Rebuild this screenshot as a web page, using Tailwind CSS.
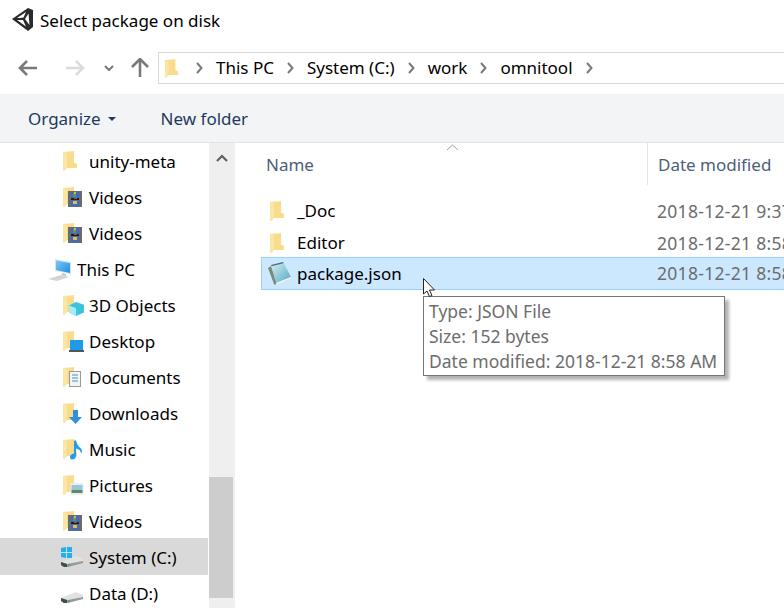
<!DOCTYPE html>
<html lang="en">
<head>
    <meta charset="UTF-8">
    <title>Select package on disk</title>
    <script src="https://cdn.jsdelivr.net/npm/@tailwindcss/browser@4"></script>
</head>
<body class="bg-white">
    <svg width="0" height="0" class="absolute">
        <defs>
            <linearGradient id="fold" x1="0" y1="0" x2="1" y2="0">
                <stop offset="0" stop-color="#f6d987"/>
                <stop offset="1" stop-color="#fdecaf"/>
            </linearGradient>
            <linearGradient id="page" x1="0" y1="0" x2="1" y2="1">
                <stop offset="0" stop-color="#d8f0f4"/>
                <stop offset="1" stop-color="#4fa9c4"/>
            </linearGradient>
            <linearGradient id="screen" x1="0" y1="0" x2="1" y2="1">
                <stop offset="0" stop-color="#7cc8f6"/>
                <stop offset="1" stop-color="#1e8fe0"/>
            </linearGradient>
            <symbol id="folder" viewBox="0 0 15 20">
                <path d="M0 1 L11 0 V12 L14 13 V17 H4 L1 20 H0 Z" fill="url(#fold)"/>
                <path d="M0 1 L4 2 V17 L1 20 H0 Z" fill="#fbe7a5"/>
                <path d="M4 2 L11 0 V12 L14 13 V17 H4 Z" fill="#f8dc8c"/>
            </symbol>
            <symbol id="film" viewBox="0 0 14 16">
                <rect width="14" height="16" fill="#6b6b6b"/>
                <rect x="3" y="1" width="8" height="6" fill="#3a6cc4"/>
                <rect x="3" y="9" width="8" height="6" fill="#3a6cc4"/>
                <rect x="5" y="2" width="3" height="4" fill="#5a9a50"/>
                <rect x="6" y="1" width="2" height="2" fill="#e0b040"/>
                <rect x="5" y="10" width="4" height="3" fill="#e0c040"/>
                <rect x="3" y="7" width="8" height="2" fill="#2a1a1a"/>
                <rect x="6" y="7" width="3" height="1" fill="#c04040"/>
            </symbol>
            <symbol id="drive" viewBox="0 0 22 11">
                <path d="M0 6 L15 0 L22 3 V5 L6 8 Z" fill="#e2e2e2"/>
                <path d="M0 6 L6 8 L22 5 V7 L7 11 H3 L0 9 Z" fill="#9a9a9a"/>
                <path d="M0 6 L6 8 V11 H3 L0 9 Z" fill="#4a4a4a"/>
                <rect x="7" y="8" width="2" height="2" fill="#45b060"/>
            </symbol>
            <symbol id="crumb" viewBox="0 0 7 12">
                <path d="M1 1 L5.5 6 L1 11" fill="none" stroke="#7a7a7a" stroke-width="2"/>
            </symbol>
        </defs>
    </svg>

    <div class="relative w-[784px] h-[608px] overflow-hidden flex flex-col font-['Noto_Sans','Open_Sans',sans-serif] text-[17px] text-black">
        <!-- Title bar -->
        <div class="h-[52px] flex items-start pt-[7px] pl-[11px] gap-[6px] shrink-0">
            <svg width="23" height="25" viewBox="0 0 23 25">
                <path d="M1 12 L17 1 L22 3 V20 L17 24 Z" fill="#2b2b2b"/>
                <path d="M6 11 L15 5 L12.5 10.5 L9 11 Z M17.5 6.5 L18.5 18 L14 12 Z M6 13 L12 13 L15 19.5 Z" fill="#ffffff"/>
            </svg>
            <span class="leading-[28px]">Select package on disk</span>
        </div>

        <!-- Navigation row -->
        <div class="h-[42px] flex items-start shrink-0">
            <div class="w-[158px] flex items-center h-[32px] shrink-0">
                <svg class="ml-[18px]" width="20" height="16" viewBox="0 0 20 16"><path d="M9 1 L2 8 L9 15 M2 8 H19" fill="none" stroke="#7a7a7a" stroke-width="2.6"/></svg>
                <svg class="ml-[27px]" width="20" height="16" viewBox="0 0 20 16"><path d="M11 1 L18 8 L11 15 M18 8 H1" fill="none" stroke="#dcdcdc" stroke-width="2.6"/></svg>
                <svg class="ml-[19px]" width="10" height="7" viewBox="0 0 10 7"><path d="M1 1 L5 5 L9 1" fill="none" stroke="#7a7a7a" stroke-width="2"/></svg>
                <svg class="ml-[17px]" width="18" height="20" viewBox="0 0 18 20"><path d="M1 9 L9 1 L17 9 M9 1 V19" fill="none" stroke="#7a7a7a" stroke-width="2.6"/></svg>
            </div>
            <div class="flex-1 h-[32px] border border-[#d9d9d9] border-r-0 flex items-center pl-[6px] gap-[13px]">
                <svg width="14" height="19"><use href="#folder"/></svg>
                <svg class="ml-[4px]" width="7" height="12"><use href="#crumb"/></svg>
                <span>This PC</span>
                <svg width="7" height="12"><use href="#crumb"/></svg>
                <span>System (C:)</span>
                <svg width="7" height="12"><use href="#crumb"/></svg>
                <span>work</span>
                <svg width="7" height="12"><use href="#crumb"/></svg>
                <span>omnitool</span>
                <svg width="7" height="12"><use href="#crumb"/></svg>
            </div>
        </div>

        <!-- Toolbar -->
        <div class="h-[49px] shrink-0 bg-[#f3f4f6] border-b border-[#e3e3e3] flex items-center pl-[28px] pt-[1px] text-[#1e3a5f]">
            <span>Organize</span>
            <span class="ml-[7px] w-0 h-0 border-x-[4px] border-x-transparent border-t-[4px] border-t-[#1e3a5f]"></span>
            <span class="ml-[45px]">New folder</span>
        </div>

        <div class="flex flex-1 min-h-0">
            <!-- Sidebar -->
            <div class="w-[209px] shrink-0 flex flex-col overflow-hidden">
                <div class="h-[36px] shrink-0 flex items-center pl-[62px] pt-[2px]">
                    <span class="relative w-[27px] h-[24px] shrink-0"><svg class="absolute left-[1px] top-[1px]" width="15" height="20"><use href="#folder"/></svg></span>
                    <span>unity-meta</span>
                </div>
                <div class="h-[36px] shrink-0 flex items-center pl-[62px] pt-[2px]">
                    <span class="relative w-[27px] h-[24px] shrink-0"><svg class="absolute left-[1px] top-[1px]" width="15" height="20"><use href="#folder"/></svg><svg class="absolute left-[6px] top-[5px]" width="14" height="16"><use href="#film"/></svg></span>
                    <span>Videos</span>
                </div>
                <div class="h-[36px] shrink-0 flex items-center pl-[62px] pt-[2px]">
                    <span class="relative w-[27px] h-[24px] shrink-0"><svg class="absolute left-[1px] top-[1px]" width="15" height="20"><use href="#folder"/></svg><svg class="absolute left-[6px] top-[5px]" width="14" height="16"><use href="#film"/></svg></span>
                    <span>Videos</span>
                </div>
                <div class="h-[36px] shrink-0 flex items-center pl-[48px] pt-[2px]">
                    <svg class="w-[24px] h-[23px] mr-[5px] shrink-0" viewBox="0 0 24 23">
                        <path d="M7 0 L23 3 V15 L7 12 Z" fill="#d8e4ec"/>
                        <path d="M8 1.5 L22 4 V14 L8 11 Z" fill="url(#screen)"/>
                        <path d="M0 20 L13 16 L21 18 L9 22 Z" fill="#d4d4d4"/>
                        <path d="M14 14 L18 15 V17 L14 16 Z" fill="#c4c4c4"/>
                    </svg>
                    <span>This PC</span>
                </div>
                <div class="h-[36px] shrink-0 flex items-center pl-[62px] pt-[2px]">
                    <span class="relative w-[27px] h-[24px] shrink-0"><svg class="absolute left-[1px] top-[1px]" width="15" height="20"><use href="#folder"/></svg>
                        <svg class="absolute left-[7px] top-[8px]" width="15" height="14" viewBox="0 0 17 16"><path d="M8 0 L17 3 V12 L8 16 L0 12 V4 Z" fill="#3cc4dc"/><path d="M0 4 L8 7 V16 L0 12 Z" fill="#a6ecf4"/></svg></span>
                    <span>3D Objects</span>
                </div>
                <div class="h-[36px] shrink-0 flex items-center pl-[62px] pt-[2px]">
                    <span class="relative w-[27px] h-[24px] shrink-0"><svg class="absolute left-[1px] top-[1px]" width="15" height="20"><use href="#folder"/></svg>
                        <svg class="absolute left-[7px] top-[10px]" width="15" height="12" viewBox="0 0 15 12"><rect x="1" width="13" height="10" fill="#1e9be8"/><rect y="10" width="15" height="2" fill="#555555"/></svg></span>
                    <span>Desktop</span>
                </div>
                <div class="h-[36px] shrink-0 flex items-center pl-[62px] pt-[2px]">
                    <span class="relative w-[27px] h-[24px] shrink-0"><svg class="absolute left-[1px] top-[1px]" width="15" height="20"><use href="#folder"/></svg>
                        <svg class="absolute left-[7px] top-[5px]" width="12" height="16" viewBox="0 0 12 16"><rect x="0.5" y="0.5" width="11" height="15" fill="#f4f4f4" stroke="#9a9a9a"/><path d="M3 4 H9 M3 7 H9 M3 10 H9" stroke="#4a90c8"/></svg></span>
                    <span>Documents</span>
                </div>
                <div class="h-[36px] shrink-0 flex items-center pl-[62px] pt-[2px]">
                    <span class="relative w-[27px] h-[24px] shrink-0"><svg class="absolute left-[1px] top-[1px]" width="15" height="20"><use href="#folder"/></svg>
                        <svg class="absolute left-[7px] top-[8px]" width="13" height="14" viewBox="0 0 13 14"><path d="M4 0 H9 V7 H13 L6.5 14 L0 7 H4 Z" fill="#2f8fdc"/></svg></span>
                    <span>Downloads</span>
                </div>
                <div class="h-[36px] shrink-0 flex items-center pl-[62px] pt-[2px]">
                    <span class="relative w-[27px] h-[24px] shrink-0"><svg class="absolute left-[1px] top-[1px]" width="15" height="20"><use href="#folder"/></svg>
                        <svg class="absolute left-[8px] top-[2px]" width="13" height="20" viewBox="0 0 13 19"><path d="M4 0 H6 Q7 5 11 8 Q13 11 11 13 Q11 9 6 8 V15 Q6 19 2 19 Q0 19 0 16.5 Q0 14 4 13 Z" fill="#1d9cf0"/></svg></span>
                    <span>Music</span>
                </div>
                <div class="h-[36px] shrink-0 flex items-center pl-[62px] pt-[2px]">
                    <span class="relative w-[27px] h-[24px] shrink-0"><svg class="absolute left-[1px] top-[1px]" width="15" height="20"><use href="#folder"/></svg>
                        <svg class="absolute left-[8px] top-[9px]" width="14" height="12" viewBox="0 0 13 12"><rect width="13" height="12" fill="#e8eef2"/><rect x="1" y="2" width="11" height="5" fill="#9cc4dc"/><rect x="1" y="7" width="11" height="3" fill="#5f8a64"/></svg></span>
                    <span>Pictures</span>
                </div>
                <div class="h-[36px] shrink-0 flex items-center pl-[62px] pt-[2px]">
                    <span class="relative w-[27px] h-[24px] shrink-0"><svg class="absolute left-[1px] top-[1px]" width="15" height="20"><use href="#folder"/></svg><svg class="absolute left-[6px] top-[5px]" width="14" height="16"><use href="#film"/></svg></span>
                    <span>Videos</span>
                </div>
                <div class="h-[37px] w-[208px] shrink-0 flex items-center pl-[62px] pt-[3px] bg-[#d9d9d9] -mt-[1px]">
                    <span class="relative w-[27px] h-[24px] shrink-0">
                        <svg class="absolute left-[-1px] top-[10px]" width="22" height="11"><use href="#drive"/></svg>
                        <svg class="absolute left-[-1px] top-[1px]" width="11" height="11" viewBox="0 0 11 11"><path d="M0 1 L5 0 V5 H0 Z M6 0 L11 0 V5 H6 Z M0 6 H5 V11 L0 10 Z M6 6 H11 V11 H6 Z" fill="#1fb0f0"/></svg>
                    </span>
                    <span>System (C:)</span>
                </div>
                <div class="h-[36px] shrink-0 flex items-center pl-[62px] pt-[2px]">
                    <span class="relative w-[27px] h-[24px] shrink-0"><svg class="absolute left-[-1px] top-[10px]" width="22" height="11"><use href="#drive"/></svg></span>
                    <span>Data (D:)</span>
                </div>
            </div>

            <!-- Scrollbar -->
            <div class="w-[25px] shrink-0 bg-[#efefef] flex flex-col pt-[11px]">
                <svg class="ml-[7px]" width="12" height="8" viewBox="0 0 12 8"><path d="M1 7 L6 2 L11 7" fill="none" stroke="#606060" stroke-width="2.2"/></svg>
                <div class="mt-[315px] w-[24px] h-[121px] bg-[#cdcdcd]"></div>
            </div>

            <!-- File list -->
            <div class="flex-1 min-w-0 border-l border-[#f0f0f0] flex flex-col relative">
                <div class="h-[42px] shrink-0 flex text-[#4c607a] relative">
                    <svg class="absolute left-[211px] top-0" width="13" height="8" viewBox="0 0 13 8"><path d="M1 7 L6.5 2 L12 7" fill="none" stroke="#9a9a9a"/></svg>
                    <div class="w-[413px] pl-[31px] pt-[9px] border-r border-[#e5e5e5]">Name</div>
                    <div class="pl-[10px] pt-[9px] whitespace-nowrap">Date modified</div>
                </div>
                <div class="mt-[10px] flex flex-col">
                    <div class="h-[32px] flex items-center pl-[35px]"><svg class="shrink-0" width="15" height="20"><use href="#folder"/></svg><span class="ml-[12px] w-[360px] shrink-0">_Doc</span><span class="text-[#6d6d6d] text-[17.5px] tracking-[0.3px] whitespace-nowrap">2018-12-21 9:37 AM</span></div>
                    <div class="h-[32px] flex items-center pl-[35px]"><svg class="shrink-0" width="15" height="20"><use href="#folder"/></svg><span class="ml-[12px] w-[360px] shrink-0">Editor</span><span class="text-[#6d6d6d] text-[17.5px] tracking-[0.3px] whitespace-nowrap">2018-12-21 8:58 AM</span></div>
                    <div class="h-[33px] -mt-[2px] flex items-center ml-[26px] pl-[6px] bg-[#cce8ff] border border-r-0 border-[#99d1ff]">
                        <svg class="shrink-0" width="23" height="23" viewBox="0 0 23 23">
                            <path d="M0 6 L6 22 L7 23 L9 21 L3 4 Z" fill="#7a8a78"/>
                            <path d="M3 3 L15 0 L23 15 L8 21 Z" fill="url(#page)"/>
                            <path d="M3 3 L15 0 L15.6 1.2 L3.5 4.2 Z" fill="#4f6f78"/>
                            <path d="M8 21 L23 15 V16.5 L8.5 22.5 Z" fill="#f0f0f0"/>
                        </svg>
                        <span class="ml-[6px] w-[360px] shrink-0">package.json</span><span class="text-[#6d6d6d] text-[17.5px] tracking-[0.3px] whitespace-nowrap">2018-12-21 8:58 AM</span>
                    </div>
                </div>
            </div>
        </div>

        <!-- Tooltip -->
        <div class="absolute left-[423px] top-[296px] w-[302px] h-[80px] bg-white border border-[#767676] shadow-[4px_4px_3px_rgba(0,0,0,0.3)] text-[#6d6d6d] text-[17.5px] leading-[25px] pl-[5px] pt-[2px] whitespace-nowrap">
            <div>Type: JSON File</div>
            <div>Size: 152 bytes</div>
            <div>Date modified: 2018-12-21 8:58 AM</div>
        </div>

        <!-- Cursor -->
        <svg class="absolute left-[423px] top-[278px]" width="14" height="20" viewBox="0 0 14 20">
            <path d="M0.5 0.5 V16 L4 13 L6.5 18.5 L9 17.5 L6.5 12 H11.5 Z" fill="#ffffff" stroke="#222222"/>
        </svg>
    </div>
</body>
</html>
